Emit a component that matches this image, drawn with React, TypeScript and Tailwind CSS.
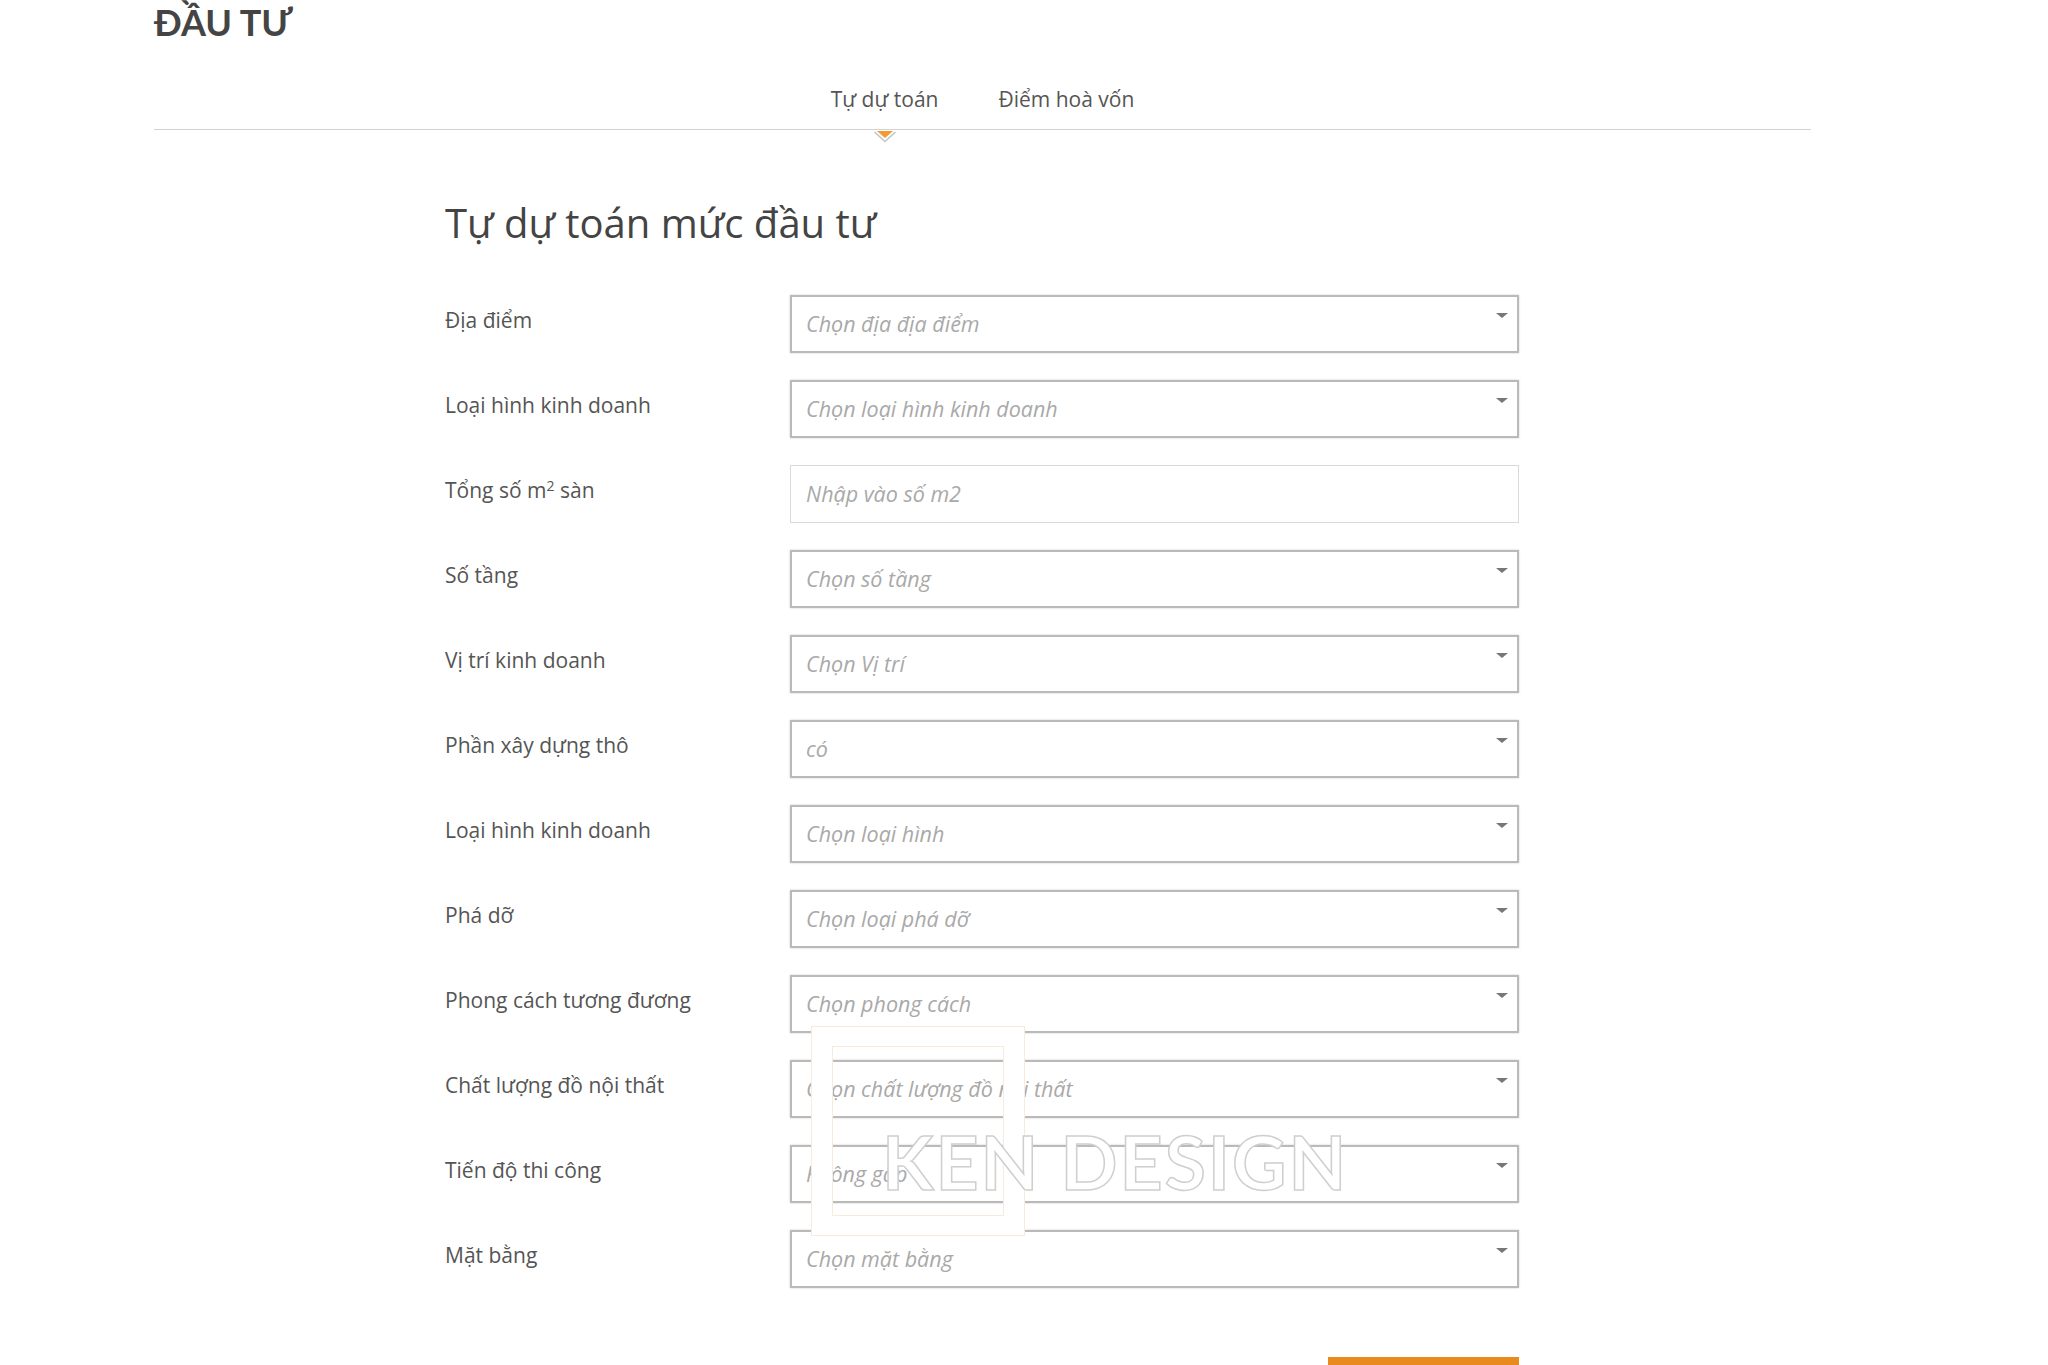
// Đầu tư · Tự dự toán mức đầu tư
//
// Static form page: page title, two tabs with an orange marker under the
// active one, then a two-column form of selects / inputs and a submit bar
// that runs off the bottom of the viewport. A faint "KEN DESIGN" watermark
// sits over the lower rows.

type Field = {
  label: React.ReactNode;
  placeholder: string;
  kind: 'select' | 'input';
};

const FIELDS: Field[] = [
  { label: 'Địa điểm', placeholder: 'Chọn địa địa điểm', kind: 'select' },
  { label: 'Loại hình kinh doanh', placeholder: 'Chọn loại hình kinh doanh', kind: 'select' },
  {
    label: (
      <>
        Tổng số m<sup className="text-[14px]">2</sup> sàn
      </>
    ),
    placeholder: 'Nhập vào số m2',
    kind: 'input',
  },
  { label: 'Số tầng', placeholder: 'Chọn số tầng', kind: 'select' },
  { label: 'Vị trí kinh doanh', placeholder: 'Chọn Vị trí', kind: 'select' },
  { label: 'Phần xây dựng thô', placeholder: 'có', kind: 'select' },
  { label: 'Loại hình kinh doanh', placeholder: 'Chọn loại hình', kind: 'select' },
  { label: 'Phá dỡ', placeholder: 'Chọn loại phá dỡ', kind: 'select' },
  { label: 'Phong cách tương đương', placeholder: 'Chọn phong cách', kind: 'select' },
  { label: 'Chất lượng đồ nội thất', placeholder: 'Chọn chất lượng đồ nội thất', kind: 'select' },
  { label: 'Tiến độ thi công', placeholder: 'Không gấp', kind: 'select' },
  { label: 'Mặt bằng', placeholder: 'Chọn mặt bằng', kind: 'select' },
];

function FieldRow({ field }: { field: Field }) {
  const isSelect = field.kind === 'select';
  return (
    <div className="flex items-start">
      <div className="w-[345px] shrink-0 pt-[13px] text-[21px] leading-[24px] text-[#555]">
        {field.label}
      </div>
      <div
        className={
          isSelect
            ? 'relative w-[729px] h-[58px] flex items-center pl-[14px] border-2 border-[#bababa] shadow-[0_0_2px_rgba(0,0,0,0.2)] bg-white'
            : 'relative w-[729px] h-[58px] flex items-center pl-[15px] border border-[#dadada] bg-white'
        }
      >
        <span className="italic text-[21.5px] leading-[24px] text-[#a9a9a9]">{field.placeholder}</span>
        {isSelect && (
          <span className="absolute right-[9px] top-[16px] w-0 h-0 border-x-[6px] border-t-[5px] border-x-transparent border-t-[#777]" />
        )}
      </div>
    </div>
  );
}

export default function App() {
  return (
    <div className="relative w-full h-[1365px] overflow-hidden bg-white font-['Open_Sans','Noto_Sans',sans-serif]">
      <div className="pl-[154px] pr-[237px]">
        <h1 className="pt-[4px] font-['Lato','Noto_Sans',sans-serif] text-[36px] leading-[36px] font-bold text-[#444]">
          ĐẦU TƯ
        </h1>

        <div className="mt-[47px] border-b border-[#d2d2d2]">
          <div className="flex justify-center gap-[60px] pb-[18px] text-[21px] leading-[24px] text-[#555]">
            <div className="relative">
              Tự dự toán
              <svg
                className="absolute left-1/2 -translate-x-1/2 top-[44px]"
                width="24"
                height="12"
                viewBox="0 0 24 12"
              >
                <path d="M4 0 L20 0 L12 7 Z" fill="#f39a35" />
                <path d="M1.5 1 L12 10.5 L22.5 1" fill="none" stroke="#c4c4c4" strokeWidth="1.6" />
              </svg>
            </div>
            <div>Điểm hoà vốn</div>
          </div>
        </div>

        <div className="ml-[291px] w-[1074px]">
          <h2 className="mt-[69px] text-[40px] leading-[48px] text-[#444]">Tự dự toán mức đầu tư</h2>

          <div className="mt-[48px] flex flex-col gap-[27px]">
            {FIELDS.map((f, i) => (
              <FieldRow key={i} field={f} />
            ))}
          </div>

          <div className="mt-[69px] flex justify-end">
            <button
              type="button"
              className="w-[191px] h-[52px] bg-[#e98a1e] text-white text-[20px] font-bold"
            >
              Tính toán
            </button>
          </div>
        </div>
      </div>

      {/* watermark */}
      <div className="absolute left-[812px] top-[1027px] w-[212px] h-[208px] border-x-[20px] border-y-[19px] border-white shadow-[0_0_0_1px_#f6ebdd,inset_0_0_0_1px_#f6ebdd] pointer-events-none" />
      <div className="absolute left-[882px] top-[1124px] font-['Lato','Noto_Sans',sans-serif] text-[75px] leading-none font-bold tracking-[2px] text-white [-webkit-text-stroke:1.5px_#cfcfcf] whitespace-nowrap pointer-events-none">
        KEN DESIGN
      </div>
    </div>
  );
}
